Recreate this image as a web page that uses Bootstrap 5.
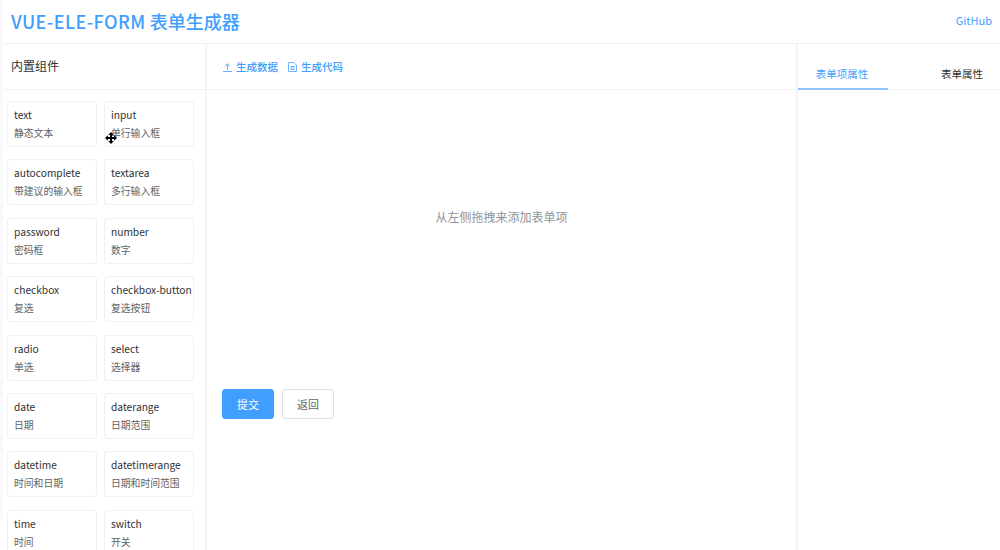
<!DOCTYPE html>
<html lang="zh">
<head>
<meta charset="utf-8">
<title>VUE-ELE-FORM 表单生成器</title>
<link href="https://cdn.jsdelivr.net/npm/bootstrap@5.3.0/dist/css/bootstrap.min.css" rel="stylesheet">
<style>
html,body{height:550px;overflow:hidden;background:#fff}
body{font-family:"Noto Sans CJK SC","Noto Sans",sans-serif;font-size:12px;color:#303133;position:relative}
.top-bar{height:44px;border-bottom:1px solid #f1f1f4;padding:0 8px 2px 11px}
.brand-name{font-size:18px;font-weight:500;color:#409eff;line-height:1}
.brand-latin{letter-spacing:.45px}
.top-link{font-size:11px;color:#409eff;text-decoration:none}
.work-area{height:506px}
.side-pane{width:207px;flex:none;border-right:2px solid #f4f4fa;overflow:hidden}
.side-head{height:46px;padding:0 0 1px 11px;border-bottom:1px solid #f1f1f4;font-size:12px;color:#303133}
.comp-grid{display:grid;grid-template-columns:90px 90px;column-gap:7px;row-gap:12.4px;padding:11px 0 0 7px}
.comp-item{height:46px;border:1px solid #f0f0f6;border-radius:3px;padding:4px 0 0 6px;line-height:18px;font-size:10.200px;white-space:nowrap;overflow:hidden}
.comp-sub{color:#606266;font-size:9.800px}
.main-pane{flex:1;min-width:0}
.main-head{height:46px;padding-left:16px;border-bottom:1px solid #f1f1f4;gap:10px}
.tool-link{font-size:10.500px;font-weight:500;color:#409eff;text-decoration:none;gap:4px}
.tool-link svg{stroke:#6cb2ff}
.empty-tip{height:299px;padding-top:118px;text-align:center;font-size:12px;color:#909399;line-height:18px}
.form-acts{padding-left:15px;gap:8px}
.act-btn{width:52px;height:30px;padding:0;font-size:11px;border-radius:3px;line-height:1}
.act-main{background:#409eff;border:1px solid #409eff;color:#fff}
.act-back{background:#fff;border:1px solid #dcdfe6;color:#606266}
.prop-pane{width:204px;flex:none;border-left:2px solid #f4f4fa}
.tab-row{height:46px;border-bottom:1px solid #f1f1f4}
.prop-tab{font-size:10.500px;line-height:1;padding-top:25px;height:46px;text-align:center}
.tab-on{width:90px;color:#409eff;border-bottom:2px solid #8cc5ff;padding-right:2px}
.tab-off{flex:1;color:#303133;padding-left:36px}
.page-edge{position:absolute;left:0;top:0;width:3px;height:520px;background:#f9f9fb;border-bottom-right-radius:3px}
.drag-cursor{position:absolute;left:105px;top:132px;width:12px;height:12px}
</style>
</head>
<body>
<header class="top-bar d-flex align-items-center justify-content-between">
  <span class="brand-name"><span class="brand-latin">VUE-ELE-FORM</span> 表单生成器</span>
  <a class="top-link" href="#">GitHub</a>
</header>
<div class="work-area d-flex">
  <aside class="side-pane">
    <div class="side-head d-flex align-items-center">内置组件</div>
    <div class="comp-grid">
      <div class="comp-item">text<br><span class="comp-sub">静态文本</span></div>
      <div class="comp-item">input<br><span class="comp-sub">单行输入框</span></div>
      <div class="comp-item">autocomplete<br><span class="comp-sub">带建议的输入框</span></div>
      <div class="comp-item">textarea<br><span class="comp-sub">多行输入框</span></div>
      <div class="comp-item">password<br><span class="comp-sub">密码框</span></div>
      <div class="comp-item">number<br><span class="comp-sub">数字</span></div>
      <div class="comp-item">checkbox<br><span class="comp-sub">复选</span></div>
      <div class="comp-item">checkbox-button<br><span class="comp-sub">复选按钮</span></div>
      <div class="comp-item">radio<br><span class="comp-sub">单选</span></div>
      <div class="comp-item">select<br><span class="comp-sub">选择器</span></div>
      <div class="comp-item">date<br><span class="comp-sub">日期</span></div>
      <div class="comp-item">daterange<br><span class="comp-sub">日期范围</span></div>
      <div class="comp-item">datetime<br><span class="comp-sub">时间和日期</span></div>
      <div class="comp-item">datetimerange<br><span class="comp-sub">日期和时间范围</span></div>
      <div class="comp-item">time<br><span class="comp-sub">时间</span></div>
      <div class="comp-item">switch<br><span class="comp-sub">开关</span></div>
    </div>
  </aside>
  <main class="main-pane">
    <div class="main-head d-flex align-items-center">
      <a class="tool-link d-inline-flex align-items-center" href="#">
        <svg width="9" height="10" viewBox="0 0 9 10" fill="none" stroke-width="1"><path d="M4.500 8V2M2 4.200 4.500 1.800 7 4.200M0 9.500h9"/></svg>生成数据</a>
      <a class="tool-link d-inline-flex align-items-center" href="#">
        <svg width="9" height="10" viewBox="0 0 9 10" fill="none" stroke-width="1"><path d="M.5.500h5.500l2.500 2.500v6.500h-8zM2.500 4.500h4M2.500 6h4M2.500 7.500h4"/></svg>生成代码</a>
    </div>
    <div class="empty-tip">从左侧拖拽来添加表单项</div>
    <div class="form-acts d-flex">
      <button class="act-btn act-main" type="button">提交</button>
      <button class="act-btn act-back" type="button">返回</button>
    </div>
  </main>
  <aside class="prop-pane">
    <div class="tab-row d-flex">
      <div class="prop-tab tab-on">表单项属性</div>
      <div class="prop-tab tab-off">表单属性</div>
    </div>
  </aside>
</div>
<div class="page-edge"></div>
<svg class="drag-cursor" viewBox="0 0 12 12"><path d="M6 0 8.800 3H7v2h2V3.200L12 6 9 8.800V7H7v2h1.800L6 12 3.200 9H5V7H3v1.800L0 6l3-2.800V5h2V3H3.200z" fill="#000"/></svg>
</body>
</html>
